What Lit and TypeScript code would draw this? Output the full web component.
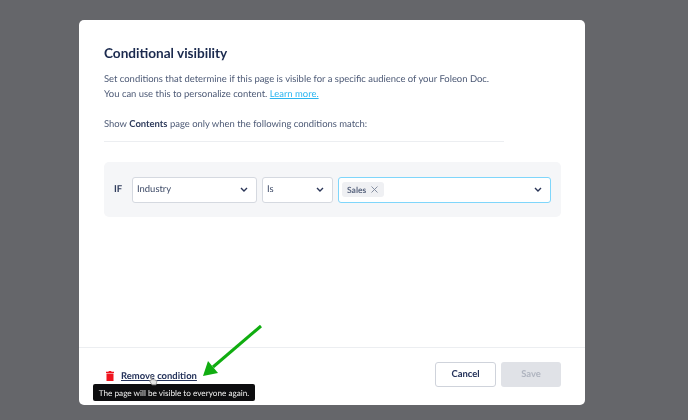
import { LitElement, html, css } from 'lit';
import { customElement } from 'lit/decorators.js';

const chevron = html`<svg class="chev" width="8" height="5" viewBox="0 0 8 5"><path d="M1 1l3 3 3-3" fill="none" stroke="#2a3557" stroke-width="1.4"/></svg>`;

@customElement('app-root')
export class AppRoot extends LitElement {
  static styles = css`
    :host {
      display: block;
      width: 688px;
      height: 420px;
      overflow: hidden;
      font-family: Lato, "Liberation Sans", sans-serif;
      text-rendering: geometricPrecision;
    }
    .page {
      position: relative;
      box-sizing: border-box;
      height: 420px;
      padding: 20px 103px 15px 79px;
      background: #65666a;
      filter: blur(0.45px);
    }
    .modal {
      display: flex;
      flex-direction: column;
      height: 385px;
      background: #fff;
      border-radius: 5px;
    }
    .body {
      flex: 1;
      padding: 24px 25px 0;
    }
    h1 {
      margin: 0;
      font-size: 13.6px;
      line-height: 18px;
      font-weight: 700;
      color: #1b2a4e;
    }
    p {
      margin: 0;
      font-size: 9.45px;
      line-height: 15px;
      color: #4c5975;
    }
    .intro {
      margin-top: 10px;
    }
    .intro a {
      color: #2bb5f0;
      text-decoration: underline;
    }
    .show {
      margin-top: 15px;
    }
    .show b {
      color: #2f3c5c;
    }
    .rule {
      width: 400px;
      height: 1px;
      margin-top: 9px;
      background: #eceef1;
    }
    .cond {
      display: flex;
      align-items: center;
      gap: 5px;
      width: 457px;
      height: 55px;
      box-sizing: border-box;
      margin-top: 20px;
      padding: 0 10px;
      background: #f5f6f8;
      border-radius: 5px;
    }
    .if {
      width: 13px;
      font-size: 9.5px;
      font-weight: 700;
      color: #2f3c5c;
    }
    .sel {
      display: flex;
      align-items: center;
      justify-content: space-between;
      box-sizing: border-box;
      height: 26px;
      padding: 0 8px 0 4px;
      background: #fff;
      border: 1.3px solid #d5d9e0;
      border-radius: 3px;
      font-size: 9.45px;
      color: #3c4966;
    }
    .industry { width: 125px; }
    .is { width: 71px; }
    .multi {
      width: 213px;
      padding-left: 3px;
      border: 1.5px solid #7fd6fb;
    }
    .tag {
      display: flex;
      align-items: center;
      gap: 5px;
      height: 15px;
      padding: 0 6px 0 5px;
      background: #eff0f3;
      border-radius: 3px;
      font-size: 8.5px;
      font-weight: 700;
      color: #5b6780;
    }
    .footer {
      display: flex;
      align-items: center;
      justify-content: space-between;
      height: 58px;
      box-sizing: border-box;
      padding: 0 24px 5px 27px;
      border-top: 1px solid #eceef1;
    }
    .remove {
      display: flex;
      align-items: center;
      gap: 7px;
      padding-top: 4px;
      font-size: 9.45px;
      font-weight: 700;
      color: #24325a;
    }
    .remove span {
      text-decoration: underline;
    }
    .actions {
      display: flex;
      gap: 5px;
    }
    .btn {
      display: flex;
      align-items: center;
      justify-content: center;
      box-sizing: border-box;
      width: 61px;
      height: 25px;
      border-radius: 3px;
      font-size: 9.45px;
      font-weight: 700;
    }
    .cancel {
      background: #fff;
      border: 1.3px solid #cfd3db;
      color: #24325a;
    }
    .save {
      width: 60px;
      background: #e0e2e7;
      color: #b0b5c0;
    }
    .tip {
      position: absolute;
      left: 93px;
      top: 384px;
      width: 162px;
      height: 17px;
      display: flex;
      align-items: center;
      justify-content: center;
      background: #0d0d0f;
      border-radius: 2px;
      color: #f2f2f2;
      font-size: 8.2px;
      white-space: nowrap;
    }
    .arrow {
      position: absolute;
      left: 195px;
      top: 320px;
    }
    .cursor {
      position: absolute;
      left: 148px;
      top: 375px;
    }
  `;

  render() {
    return html`
      <div class="page">
        <div class="modal">
          <div class="body">
            <h1>Conditional visibility</h1>
            <p class="intro">
              Set conditions that determine if this page is visible for a specific audience of your Foleon Doc.<br />
              You can use this to personalize content. <a>Learn more.</a>
            </p>
            <p class="show">Show <b>Contents</b> page only when the following conditions match:</p>
            <div class="rule"></div>
            <div class="cond">
              <div class="if">IF</div>
              <div class="sel industry">Industry ${chevron}</div>
              <div class="sel is">Is ${chevron}</div>
              <div class="sel multi">
                <div class="tag">
                  Sales
                  <svg width="7" height="7" viewBox="0 0 7 7"><path d="M.5.5l6 6M6.5.5l-6 6" stroke="#7b8598" stroke-width="0.9"/></svg>
                </div>
                ${chevron}
              </div>
            </div>
          </div>
          <div class="footer">
            <div class="remove">
              <svg width="8" height="10" viewBox="0 0 8 10"><path d="M2.8 0h2.4l.3.8H8V2H0V.8h2.500zM.5 2.500h7V10h-7z" fill="#f0141e"/></svg>
              <span>Remove condition</span>
            </div>
            <div class="actions">
              <div class="btn cancel">Cancel</div>
              <div class="btn save">Save</div>
            </div>
          </div>
        </div>
        <div class="tip">The page will be visible to everyone again.</div>
        <svg class="cursor" width="10" height="11" viewBox="0 0 10 11"><path d="M2.500 1l1 4-2 .8 2.500 4h4l1-4-2.500-1-2.500-.3L3.500 1z" fill="#e4e4e4" stroke="#8a8a8a" stroke-width="0.8"/></svg>
        <svg class="arrow" width="70" height="62" viewBox="0 0 70 62"><path d="M66 6L18 47" stroke="#10ad10" stroke-width="3"/><path d="M8 56l5-15 10 12z" fill="#10ad10"/></svg>
      </div>
    `;
  }
}
